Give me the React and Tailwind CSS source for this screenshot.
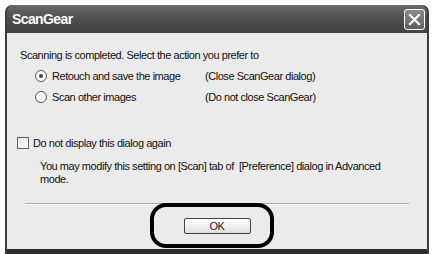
import React from 'react';

const font = { fontFamily: '"Liberation Sans", Arial, sans-serif' };

const Radio = ({ checked }) => (
  <span className="w-[12px] h-[12px] rounded-full border border-[#555] bg-white flex items-center justify-center shrink-0">
    {checked && <span className="w-[4px] h-[4px] rounded-full bg-[#444]" />}
  </span>
);

const App = () => {
  return (
    <div className="w-[432px] h-[254px] bg-white pt-[5px] pl-[5px] pr-[3px]" style={font}>
      <div className="relative h-[249px] flex flex-col rounded-t-[7px] bg-[#4b4b4b] border-x-[2px] border-[#3c3c3c]">
        {/* title bar */}
        <div className="h-[28px] flex items-center justify-between pl-[5px] pr-[2px] rounded-t-[7px] bg-gradient-to-b from-[#6a6a6a] via-[#4d4d4d] to-[#444]">
          <span className="text-white font-bold text-[14px] tracking-[-0.6px]">ScanGear</span>
          <span className="w-[21px] h-[21px] rounded-[3px] border border-white bg-gradient-to-b from-[#8a8a8a] to-[#5e5e5e] flex items-center justify-center">
            <svg width="13" height="13" viewBox="0 0 13 13">
              <path d="M2 2 L11 11 M11 2 L2 11" stroke="white" strokeWidth="2.2" strokeLinecap="square" />
            </svg>
          </span>
        </div>

        {/* body */}
        <div className="flex-1 bg-[#ebebeb] flex flex-col text-[11px] tracking-[-0.45px] text-[#111] border-b-[5px] border-[#2e2e2e]">
          <div className="pl-[13px] pt-[16px] leading-[13px]">
            Scanning is completed. Select the action you prefer to
          </div>
          <div className="pl-[28px] mt-[8px] flex flex-col gap-[9px]">
            <div className="flex items-center h-[12px]">
              <Radio checked />
              <span className="ml-[5px] w-[153px]">Retouch and save the image</span>
              <span>(Close ScanGear dialog)</span>
            </div>
            <div className="flex items-center h-[12px]">
              <Radio />
              <span className="ml-[5px] w-[153px]">Scan other images</span>
              <span>(Do not close ScanGear)</span>
            </div>
          </div>

          <div className="pl-[10px] mt-[32px] flex items-center">
            <span className="w-[12px] h-[12px] border border-[#666] bg-gradient-to-br from-[#e2e2e2] to-white shrink-0" />
            <span className="ml-[4px]">Do not display this dialog again</span>
          </div>

          <div className="pl-[33px] pr-[20px] mt-[8px] leading-[13px]">
            You may modify this setting on [Scan] tab of&nbsp; [Preference] dialog in Advanced mode.
          </div>

          <div className="mx-[18px] mt-[17px] h-[2px] border-t border-[#a9a9a9] border-b border-b-white" />

          <div className="flex justify-center mt-[13px]">
            <button className="w-[67px] h-[16px] border border-[#444] rounded-[2px] bg-gradient-to-b from-white to-[#e0e0e0] text-[11px] leading-[14px] text-[#222]" style={font}>
              OK
            </button>
          </div>
        </div>

        {/* annotation highlight */}
        <div className="absolute left-[143px] top-[198px] w-[124px] h-[45px] rounded-[16px] border-[4px] border-black" />
      </div>
    </div>
  );
};

export default App;
